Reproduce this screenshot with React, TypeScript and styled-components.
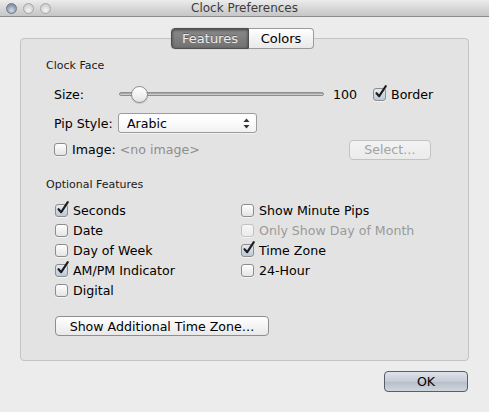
import React from "react";
import styled, { createGlobalStyle, css } from "styled-components";

const Global = createGlobalStyle`
  html, body { margin: 0; padding: 0; }
  body { font-family: "DejaVu Sans", "Liberation Sans", sans-serif; }
`;

const FS = "12.6px";

const Window = styled.div`
  width: 489px;
  height: 412px;
  background: #ececec;
  display: flex;
  flex-direction: column;
  overflow: hidden;
  color: #000;
`;

const TitleBar = styled.div`
  height: 16px;
  display: grid;
  grid-template-columns: 1fr auto 1fr;
  align-items: center;
  background: linear-gradient(#ececec, #d4d4d4 60%, #c6c6c6);
  border-bottom: 1px solid #8c8c8c;
  padding: 0 6px;
`;

const Lights = styled.div`
  display: flex;
  gap: 6px;
  align-items: center;
`;

const Light = styled.span<{ $active?: boolean }>`
  width: 11px;
  height: 11px;
  border-radius: 50%;
  box-sizing: border-box;
  border: 1px solid ${(p) => (p.$active ? "#6b7a8c" : "#a8a8a8")};
  background: ${(p) =>
    p.$active
      ? "radial-gradient(circle at 50% 70%, #d4dde8, #8e9db0 60%, #6d7c90)"
      : "radial-gradient(circle at 50% 70%, #f4f4f4, #d6d6d6 60%, #c2c2c2)"};
`;

const Title = styled.div`
  font-size: 12px;
  color: #3c3c3c;
  line-height: 16px;
`;

const Body = styled.div`
  flex: 1;
  display: flex;
  flex-direction: column;
  padding: 11px 20px 0 20px;
`;

const Tabs = styled.div`
  display: flex;
  justify-content: center;
  margin-bottom: -11px;
  position: relative;
  z-index: 1;
  padding-right: 4px;
`;

const Tab = styled.div<{ $selected?: boolean; $pos: "left" | "right" }>`
  height: 21px;
  box-sizing: border-box;
  display: flex;
  align-items: center;
  justify-content: center;
  font-size: 13px;
  ${(p) =>
    p.$pos === "left"
      ? css`border-radius: 4px 0 0 4px; width: 78px;`
      : css`border-radius: 0 4px 4px 0; width: 65px;`}
  ${(p) =>
    p.$selected
      ? css`
          background: linear-gradient(#8a8a8a, #727272);
          color: #ececec;
          border: 1px solid #4f4f4f;
          box-shadow: inset 0 1px 3px rgba(0, 0, 0, 0.55), 0 0 1px rgba(0,0,0,0.4);
          text-shadow: 0 -1px 0 rgba(0,0,0,0.3);
        `
      : css`
          background: linear-gradient(#ffffff, #f3f3f3 50%, #e9e9e9);
          color: #000;
          border: 1px solid #9b9b9b;
          border-left: none;
        `}
`;

const GroupBox = styled.div`
  height: 323px;
  box-sizing: border-box;
  border: 1px solid #c4c4c4;
  border-radius: 4px;
  background: #e3e3e3;
  padding: 20px 37px 0 25px;
  display: flex;
  flex-direction: column;
`;

const SectionLabel = styled.div<{ $gap?: number }>`
  font-size: 11px;
  line-height: 14px;
  color: #1a1a1a;
  margin-top: ${(p) => p.$gap ?? 0}px;
`;

const Row = styled.div<{ $gap: number; $h?: number }>`
  display: flex;
  align-items: center;
  height: ${(p) => p.$h ?? 20}px;
  margin-top: ${(p) => p.$gap}px;
  padding-left: 8px;
  font-size: ${FS};
`;

const FieldLabel = styled.span<{ $w: number }>`
  width: ${(p) => p.$w}px;
  flex: none;
`;

const Slider = styled.div`
  width: 205px;
  height: 16px;
  position: relative;
  display: flex;
  align-items: center;
  flex: none;
`;

const Track = styled.div`
  width: 100%;
  height: 4px;
  box-sizing: border-box;
  border: 1px solid #8f8f8f;
  border-radius: 2px;
  background: linear-gradient(#9a9a9a, #d8d8d8);
`;

const Knob = styled.div`
  position: absolute;
  left: 12px;
  top: 0;
  width: 17px;
  height: 17px;
  box-sizing: border-box;
  border-radius: 50%;
  border: 1px solid #8a8a8a;
  background: linear-gradient(#ffffff, #f0f0f0 60%, #e2e2e2);
  box-shadow: 0 1px 1px rgba(0, 0, 0, 0.15);
`;

const Value = styled.span`
  margin-left: 9px;
  width: 40px;
  flex: none;
`;

const Check = styled.label<{ $disabled?: boolean }>`
  display: flex;
  align-items: center;
  gap: 5px;
  font-size: ${FS};
  color: ${(p) => (p.$disabled ? "#9a9a9a" : "#000")};
  white-space: nowrap;
`;

const Box = styled.span<{ $checked?: boolean; $disabled?: boolean }>`
  width: 13px;
  height: 13px;
  flex: none;
  box-sizing: border-box;
  border-radius: 3px;
  border: 1px solid ${(p) => (p.$disabled ? "#c2c2c2" : "#8d8d8d")};
  background: ${(p) =>
    p.$checked
      ? "linear-gradient(#e4eaf2, #bcc8d8)"
      : p.$disabled
      ? "linear-gradient(#f6f6f6, #ececec)"
      : "linear-gradient(#ffffff, #f1f1f1 50%, #e4e4e4)"};
  box-shadow: 0 1px 0 rgba(255,255,255,0.6);
  position: relative;
`;

const Tick = styled.svg`
  position: absolute;
  left: 0px;
  top: -4px;
  width: 14px;
  height: 14px;
  overflow: visible;
`;

function CheckBox({
  label,
  checked,
  disabled,
}: {
  label: string;
  checked?: boolean;
  disabled?: boolean;
}) {
  return (
    <Check $disabled={disabled}>
      <Box $checked={checked} $disabled={disabled}>
        {checked && (
          <Tick viewBox="0 0 14 14">
            <path
              d="M2.5 8.2 L5.2 11.2 L11.8 1.2"
              fill="none"
              stroke="#1c1c1c"
              strokeWidth="2.1"
              strokeLinecap="round"
              strokeLinejoin="round"
            />
          </Tick>
        )}
      </Box>
      {label}
    </Check>
  );
}

const Popup = styled.div`
  width: 139px;
  height: 20px;
  box-sizing: border-box;
  border: 1px solid #9c9c9c;
  border-radius: 3px;
  background: linear-gradient(#ffffff, #fbfbfb 50%, #f1f1f1);
  display: flex;
  align-items: center;
  justify-content: space-between;
  padding: 0 6px 0 8px;
  font-size: ${FS};
  box-shadow: 0 1px 0 rgba(255,255,255,0.5);
`;

const Hint = styled.span`
  color: #8e8e8e;
  margin-left: 4px;
`;

const Spacer = styled.div`
  flex: 1;
`;

const PushButton = styled.div<{ $w: number; $disabled?: boolean; $default?: boolean }>`
  width: ${(p) => p.$w}px;
  height: ${(p) => (p.$default ? 21 : 20)}px;
  box-sizing: border-box;
  border-radius: 4px;
  display: flex;
  align-items: center;
  justify-content: center;
  font-size: ${FS};
  flex: none;
  ${(p) =>
    p.$default
      ? css`
          border: 1px solid #5a5e66;
          background: linear-gradient(#dfe3ea, #c5cbd4 50%, #b6bdc8 51%, #d0d6de);
          color: #000;
        `
      : p.$disabled
      ? css`
          border: 1px solid #c3c3c3;
          background: linear-gradient(#f3f3f3, #ebebeb);
          color: #a3a3a3;
        `
      : css`
          border: 1px solid #8e8e8e;
          background: linear-gradient(#ffffff, #f4f4f4 50%, #e8e8e8);
          color: #000;
        `}
`;

const Grid = styled.div`
  display: grid;
  grid-template-columns: 186px 1fr;
  grid-auto-rows: 20px;
  align-items: center;
  margin-top: 8px;
  padding-left: 9px;
`;

const ButtonRow = styled.div`
  margin-top: 16px;
  padding-left: 9px;
  display: flex;
`;

const Footer = styled.div`
  display: flex;
  justify-content: flex-end;
  margin-top: 10px;
  padding-right: 1px;
`;

const Arrows = () => (
  <svg width="7" height="11" viewBox="0 0 7 11">
    <path d="M3.5 0.5 L6.5 4 L0.5 4 Z" fill="#333" />
    <path d="M3.5 10.5 L6.5 7 L0.5 7 Z" fill="#333" />
  </svg>
);

export default function App() {
  return (
    <>
      <Global />
      <Window>
        <TitleBar>
          <Lights>
            <Light $active />
            <Light />
            <Light />
          </Lights>
          <Title>Clock Preferences</Title>
          <span />
        </TitleBar>
        <Body>
          <Tabs>
            <Tab $pos="left" $selected>
              Features
            </Tab>
            <Tab $pos="right">Colors</Tab>
          </Tabs>
          <GroupBox>
            <SectionLabel>Clock Face</SectionLabel>
            <Row $gap={11}>
              <FieldLabel $w={65}>Size:</FieldLabel>
              <Slider>
                <Track />
                <Knob />
              </Slider>
              <Value>100</Value>
              <CheckBox label="Border" checked />
            </Row>
            <Row $gap={9}>
              <FieldLabel $w={64}>Pip Style:</FieldLabel>
              <Popup>
                Arabic
                <Arrows />
              </Popup>
            </Row>
            <Row $gap={7} $h={19}>
              <CheckBox label="Image:" />
              <Hint>&lt;no image&gt;</Hint>
              <Spacer />
              <PushButton $w={82} $disabled>
                Select…
              </PushButton>
            </Row>
            <SectionLabel $gap={19}>Optional Features</SectionLabel>
            <Grid>
              <CheckBox label="Seconds" checked />
              <CheckBox label="Show Minute Pips" />
              <CheckBox label="Date" />
              <CheckBox label="Only Show Day of Month" disabled />
              <CheckBox label="Day of Week" />
              <CheckBox label="Time Zone" checked />
              <CheckBox label="AM/PM Indicator" checked />
              <CheckBox label="24-Hour" />
              <CheckBox label="Digital" />
            </Grid>
            <ButtonRow>
              <PushButton $w={214}>Show Additional Time Zone…</PushButton>
            </ButtonRow>
          </GroupBox>
          <Footer>
            <PushButton $w={84} $default>
              OK
            </PushButton>
          </Footer>
        </Body>
      </Window>
    </>
  );
}
